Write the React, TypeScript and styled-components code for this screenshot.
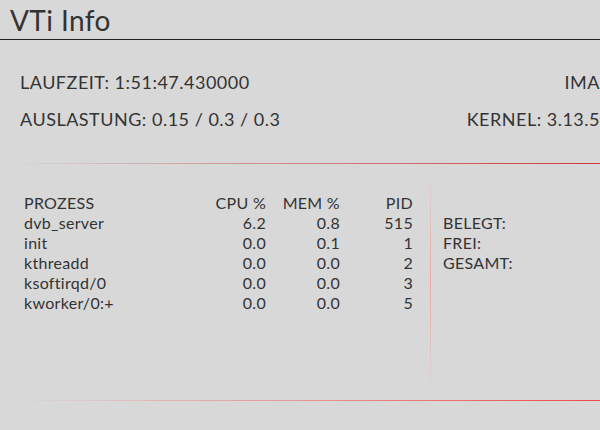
import React from 'react';
import styled, { createGlobalStyle } from 'styled-components';

const processes = [
  { name: 'dvb_server', cpu: '6.2', mem: '0.8', pid: '515' },
  { name: 'init', cpu: '0.0', mem: '0.1', pid: '1' },
  { name: 'kthreadd', cpu: '0.0', mem: '0.0', pid: '2' },
  { name: 'ksoftirqd/0', cpu: '0.0', mem: '0.0', pid: '3' },
  { name: 'kworker/0:+', cpu: '0.0', mem: '0.0', pid: '5' }
];

const GlobalStyle = createGlobalStyle`
	html, body {
		margin: 0;
		padding: 0;
		background: #d8d8d8;
		width: 600px;
		height: 430px;
		overflow: hidden;
	}
	body {
		font-family: Lato, "Open Sans", sans-serif;
		color: #333;
	}
`;

const Page = styled.div`
	width: 600px;
	height: 430px;
	display: flex;
	flex-direction: column;
	overflow: hidden;
`;

const Header = styled.div`
	height: 40px;
	box-sizing: border-box;
	border-bottom: 1px solid #222;
	padding-left: 10px;
	display: flex;
	align-items: center;
`;

const Title = styled.h1`
	margin: 0;
	font-size: 28px;
	font-weight: 400;
	color: #333;
	letter-spacing: 0.4px;
`;

const Info = styled.div`
	display: grid;
	grid-template-columns: 1fr auto;
	padding: 24px 0 25px 20px;
`;

const InfoItem = styled.div<{ $right?: boolean }>`
	font-size: 18px;
	line-height: 37px;
	white-space: nowrap;
	text-align: ${p => (p.$right ? 'right' : 'left')};
	letter-spacing: 0.5px;
`;

const Separator = styled.div<{ $strong?: boolean }>`
	height: 1px;
	flex-shrink: 0;
	background: ${p => p.$strong
		? 'linear-gradient(to right, rgba(216,216,216,0) 15px, rgba(232,150,150,0.9) 45%, #f04848 100%)'
		: 'linear-gradient(to right, rgba(216,216,216,0) 10px, rgba(205,140,140,0.9) 40%, #d43636 100%)'};
`;

const Panel = styled.div`
	height: 236px;
	display: flex;
	flex-shrink: 0;
`;

const TableSide = styled.div`
	width: 430px;
	box-sizing: border-box;
	padding: 29px 17px 0 24px;
`;

const Divider = styled.div`
	width: 1px;
	margin: 4px 0 8px;
	background: linear-gradient(to bottom, rgba(240,150,150,0), rgba(240,160,160,0.9) 50%, rgba(240,150,150,0));
`;

const MemSide = styled.div`
	flex: 1;
	padding: 49px 0 0 12px;
`;

const Row = styled.div`
	display: grid;
	grid-template-columns: 1fr 70px 74px 73px;
	font-size: 16px;
	line-height: 20px;
	letter-spacing: 0.3px;
`;

const Cell = styled.div<{ $num?: boolean }>`
	text-align: ${p => (p.$num ? 'right' : 'left')};
	white-space: nowrap;
`;

const MemLine = styled.div`
	font-size: 16px;
	line-height: 20px;
	letter-spacing: 0.3px;
`;

export default function App() {
	return (
		<Page>
			<GlobalStyle />
			<Header>
				<Title>VTi Info</Title>
			</Header>
			<Info>
				<InfoItem>LAUFZEIT: 1:51:47.430000</InfoItem>
				<InfoItem $right>IMA</InfoItem>
				<InfoItem>AUSLASTUNG: 0.15 / 0.3 / 0.3</InfoItem>
				<InfoItem $right>KERNEL: 3.13.5</InfoItem>
			</Info>
			<Separator />
			<Panel>
				<TableSide>
					<Row>
						<Cell>PROZESS</Cell>
						<Cell $num>CPU %</Cell>
						<Cell $num>MEM %</Cell>
						<Cell $num>PID</Cell>
					</Row>
					{processes.map(p => (
						<Row key={p.pid}>
							<Cell>{p.name}</Cell>
							<Cell $num>{p.cpu}</Cell>
							<Cell $num>{p.mem}</Cell>
							<Cell $num>{p.pid}</Cell>
						</Row>
					))}
				</TableSide>
				<Divider />
				<MemSide>
					<MemLine>BELEGT:</MemLine>
					<MemLine>FREI:</MemLine>
					<MemLine>GESAMT:</MemLine>
				</MemSide>
			</Panel>
			<Separator $strong />
		</Page>
	);
}
